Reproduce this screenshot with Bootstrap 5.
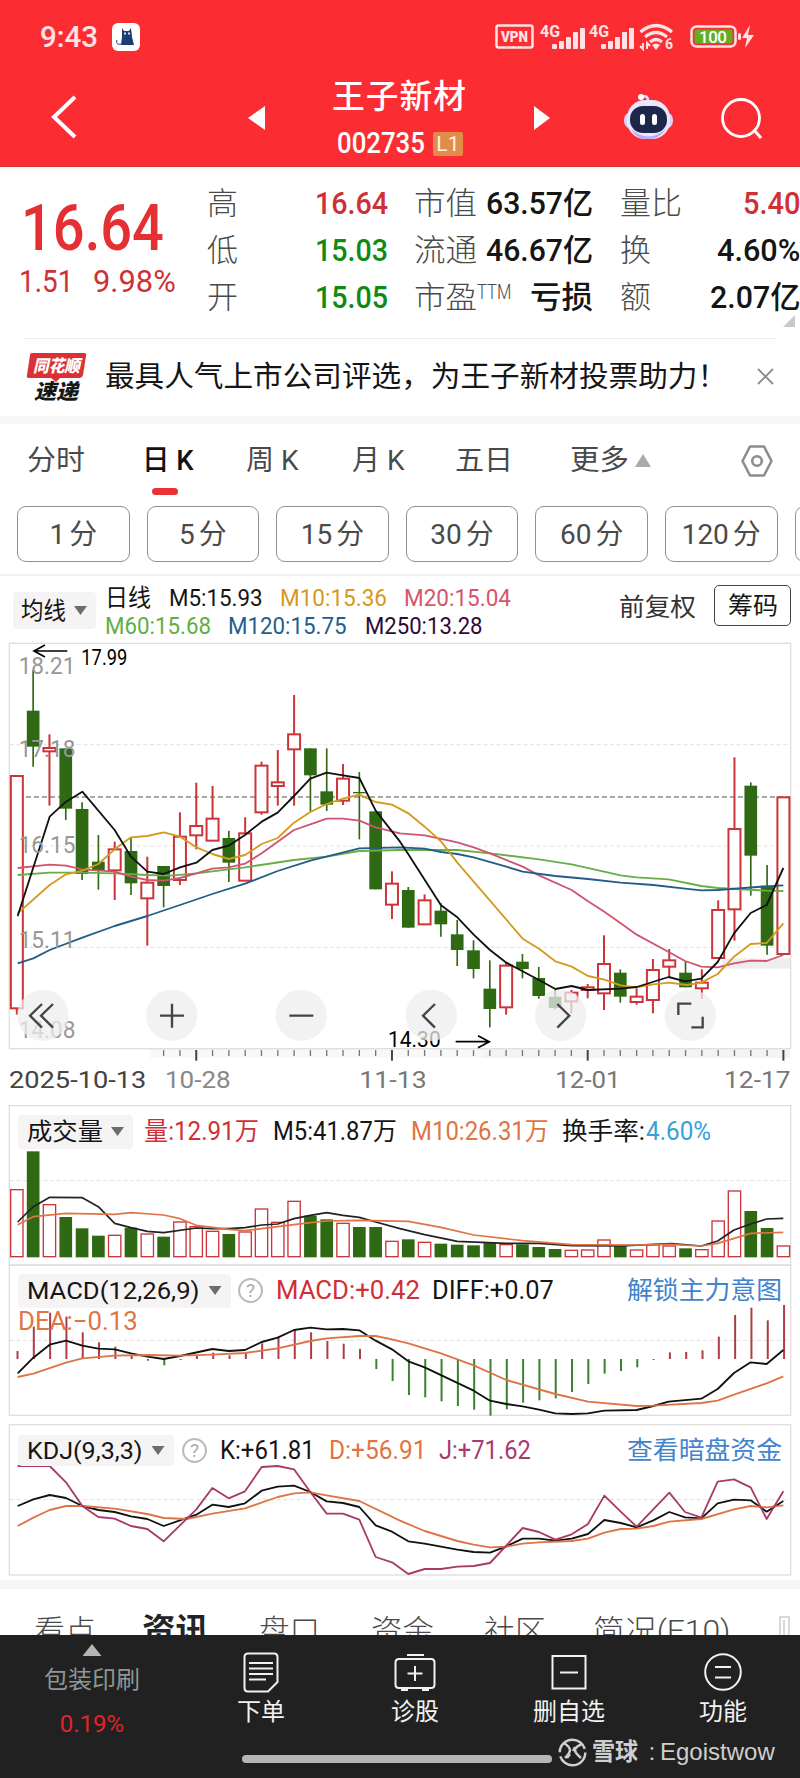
<!DOCTYPE html>
<html lang="zh-CN">
<head>
<meta charset="utf-8">
<meta name="viewport" content="width=device-width, initial-scale=1">
<title>王子新材 002735</title>
<link href="https://cdn.jsdelivr.net/npm/bootstrap@5.3.0/dist/css/bootstrap.min.css" rel="stylesheet">
<style>
:root{--up:#cf3035;--down:#118a12;--ink:#151515;--sub:#4a4a4a}
body{font-family:Roboto,"Noto Sans CJK SC",sans-serif;color:var(--ink);background:#fff;width:800px;height:1778px;overflow:hidden;line-height:1}
[data-w]{display:inline-block;white-space:nowrap;transform-origin:0 50%;flex:none}
svg{display:block;flex:none;overflow:visible}
.rowgrid{display:grid;align-items:center;justify-items:start}
/* header */
.top{height:167px;background:#fb2d33;border-bottom:1px solid #c9353a;color:#fff}
.status{height:74px;padding-left:40px;color:#ffe3e4;grid-template-columns:72px 383px 45px 49px 50px 51px 51px 1fr;font-size:29px;font-weight:500}
.navrow{height:92px;grid-template-columns:244px 82px 203px 92px 92px 1fr;padding-left:0}
.navrow>*{align-self:start}
.name{font-size:33px;font-weight:500;letter-spacing:1px;height:55px;line-height:46px;padding-left:6px}
.coderow{display:flex;align-items:center;gap:8px;padding-left:11px;height:29px;margin-top:0;transform:translateY(0)}
.code{font-size:29px;font-weight:500}
.lv{background:#e28c4a;width:30px;height:24px;border-radius:2px;font-size:21px;color:#fff3e0;line-height:25px;text-align:center}
/* quote */
.quote{height:171px;padding-top:10px;grid-template-columns:207px 181px 26px 179px 27px 180px;align-items:start;justify-items:stretch;border-top:3px solid #fafaf5;position:relative}
.cell{height:47px;display:flex;align-items:center;justify-content:space-between;font-size:31px;color:var(--ink);font-weight:500}
.cell>:first-child{font-weight:300;color:var(--sub)}
.price{font-size:65px;font-weight:500;color:#e62f33;height:65px;line-height:65px;padding-left:21px;margin-top:16px}
.chg{font-size:32px;color:var(--up);padding-left:19px;display:flex;gap:20px;height:46px;line-height:46px;margin-top:-3px}
.up{color:var(--up)!important}.dn{color:var(--down)!important}
.corner{position:absolute;right:5px;top:145px;width:12px;height:12px;background:#c9c9c9;clip-path:polygon(100% 0,100% 100%,0 100%)}
/* promo */
.promo{height:78px;grid-template-columns:78px 652px 1fr;padding-left:27px;font-size:29px;position:relative}
.promo::before{content:"";position:absolute;left:25px;right:25px;top:0;border-top:1px solid #ececec}
.band{height:8px;background:#f6f6f6}
.ktabs{height:74px;grid-template-columns:115px 104px 106px 103px 115px 65px 106px 1fr;padding-left:27px;padding-bottom:1px;font-size:28px;color:var(--sub)}
.ktabs .on{color:#111;font-weight:500;position:relative}
.ktabs .on i{position:absolute;left:10px;bottom:-20px;width:26px;height:7px;border-radius:4px;background:#ea3236}
.mins{height:78px;padding:8px 0 0 17px;display:flex;gap:17px;overflow:hidden;border-bottom:2px solid #f0f2f2}
.mins .btn{flex:none;width:112.6px;height:56px;border:1px solid #909090;border-radius:9px;padding:2px 0 0;color:var(--sub);display:flex;align-items:center;justify-content:center;font-size:28px;gap:4px}
/* moving averages */
.ma{height:64px;display:grid;grid-template-columns:92px 514px 95px 86px;justify-items:start;padding-left:13px;padding-top:8px}
.pill{background:#f6f3f4;border-radius:4px;display:inline-flex;align-items:center;padding:0 9px;gap:8px;height:34px;font-size:24px}
.tri{width:13px;height:9px;background:#6d6d6d;clip-path:polygon(0 0,100% 0,50% 100%)}
.tri.rev{clip-path:polygon(50% 0,100% 100%,0 100%)}
.l1,.l2{height:28px;font-size:24px}
.l1{grid-template-columns:64px 111px 124px 1fr}.l2{grid-template-columns:123px 137px 1fr}
.chip{height:41px;width:77px;border:1px solid #444;border-radius:5px;font-size:24px;display:flex;align-items:center;justify-content:center;margin-top:1px}
/* panels */
.panel{position:relative}
.panel>svg{position:absolute;left:0;top:0}
.panel>.rowgrid,.panel>.dea{position:relative}
.dea{font-size:26px;padding-left:18px}
.lg{height:35px;padding-left:18px;font-size:25px}
.lv1{grid-template-columns:126px 129px 138px 151px 84px 1fr}
.lv2{grid-template-columns:220px 38px 156px 195px 1fr}
.lv3{grid-template-columns:164px 38px 109px 110px 188px 1fr}
.lv3 .pill{height:31px}
.link{color:#4184cb}.or{color:#e07443}.pu{color:#a83a70}
.q{width:25px;height:25px;border:2px solid #bbb;border-radius:50%;color:#aaa;font-size:19px;line-height:21px;text-align:center}
.news{height:46px;grid-template-columns:108px 117px 112px 113px 109px 186px 1fr;padding:27px 0 0 34px;overflow:hidden;font-size:30px;font-weight:300;color:var(--sub);align-items:start}
/* bottom bar */
.dock{height:143px;background:#212121;color:#f2f2f2;display:grid;grid-template-columns:184px 154px 154px 154px 154px;justify-items:center;position:relative}
.dock>div{display:flex;flex-direction:column;align-items:center;font-size:24px}
.dock .ic{margin-top:17px;height:42px}
.dock .lb{margin-top:6px;height:26px;line-height:24px}
.home{position:absolute;left:242px;top:120px;width:310px;height:8px;border-radius:4px;background:#b5b5b5}
.wm{position:absolute;left:558px;top:101px;display:grid!important;grid-template-columns:34px 53px 15px 1fr;color:#cfcfcf;height:32px}
</style>
</head>
<body>
<header class="top">
  <div class="status rowgrid">
    <span data-w="58">9:43</span>
    <svg width="28" height="28" viewBox="0 0 28 28"><rect width="28" height="28" rx="6" fill="#fff"/><path d="M10 5l2 3h5l2-3 1 9 2 8H9l1-8z" fill="#1d3c70"/><path d="M9 21c-4 1-5-1-4-4" fill="none" stroke="#1d3c70"/><path d="M12 10.500h2M16 10.500h2" stroke="#cfe3ff" stroke-width="2"/></svg>
    <svg width="40" height="26" viewBox="0 0 40 26"><rect x="1.500" y="1.500" width="36" height="22" rx="2" fill="none" stroke="#ffe3e4" stroke-width="2.500"/><text x="6" y="17.500" font-size="14" font-weight="900" fill="#ffe3e4" textLength="27" lengthAdjust="spacingAndGlyphs">VPN</text></svg>
    <svg width="46" height="26" viewBox="0 0 46 26"><g id="sig" fill="#ffe3e4"><text x="0" y="13" font-size="16.500" font-weight="700" textLength="20" lengthAdjust="spacingAndGlyphs">4G</text><rect x="12" y="20" width="5" height="5" rx="1"/><rect x="19" y="17" width="5" height="8" rx="1"/><rect x="26" y="13" width="5" height="12" rx="1"/><rect x="33" y="8" width="5" height="17" rx="1"/><rect x="40" y="4" width="5" height="21" rx="1"/></g></svg>
    <svg width="46" height="26" viewBox="0 0 46 26"><use href="#sig"/></svg>
    <svg width="36" height="28" viewBox="0 0 36 28"><g fill="none" stroke="#ffe3e4" stroke-width="3.200"><path d="M1.500 9Q17 -4 33 9M6 14Q17 5 28 14M11 19Q17 14 23 19"/></g><path d="M13 22q4-3 8 0l-4 5z" fill="#ffe3e4"/><path d="M4 20v6l-3-3M8 26v-6l3 3" stroke="#ffe3e4" stroke-width="2" fill="none"/><text x="26" y="26" font-size="14" font-weight="700" fill="#ffe3e4">6</text></svg>
    <svg width="54" height="24" viewBox="0 0 54 24"><rect x="1.500" y="1.500" width="44" height="20" rx="5" fill="none" stroke="#ffe3e4" stroke-width="2.500"/><rect x="4.500" y="4.500" width="38" height="14" rx="2" fill="#62ad22"/><rect x="48" y="8" width="3" height="7" rx="1.500" fill="#ffe3e4"/><text x="9" y="17.500" font-size="17" fill="#fff" textLength="28">100</text></svg>
    <svg width="14" height="24" viewBox="0 0 14 24"><path d="M9 0L1 13h5L4 23l9-13H7z" fill="#ffe3e4"/></svg>
  </div>
  <div class="navrow rowgrid">
    <svg width="100" height="92"><path d="M75 23L54 43l21 20" fill="none" stroke="#fff" stroke-width="4"/></svg>
    <svg width="30" height="92"><path d="M4 44l17-12v24z" fill="#fff"/></svg>
    <div class="d-flex flex-column align-items-start">
      <div class="name"><span data-w="135">王子新材</span></div>
      <div class="coderow"><span class="code" data-w="88">002735</span><span class="lv">L1</span></div>
    </div>
    <svg width="30" height="92"><path d="M5 32l16 12-16 12z" fill="#fff"/></svg>
    <svg width="56" height="92" viewBox="0 0 56 92"><path d="M20 23q8-3 7 6" fill="none" stroke="#e6dcfa" stroke-width="2.500"/><circle cx="20" cy="23" r="3" fill="#fff"/><rect x="3" y="38" width="49" height="17" rx="8" fill="#d9d3fa"/><rect x="6" y="26" width="43" height="39" rx="18" fill="#e9e6fd"/><path d="M10 55q17 15 35 0-6 10-18 10T10 55z" fill="#b9aaf2"/><rect x="9" y="32" width="37" height="27" rx="13" fill="#1d2749"/><rect x="19" y="40" width="5" height="11" rx="2.500" fill="#fff"/><rect x="31" y="40" width="5" height="11" rx="2.500" fill="#fff"/></svg>
    <svg width="50" height="92"><circle cx="28" cy="44" r="18.500" fill="none" stroke="#fff" stroke-width="2.800"/><path d="M41 56l7 8" stroke="#fff" stroke-width="3"/></svg>
  </div>
</header>

<section class="quote rowgrid">
  <div><div class="price"><span data-w="143">16.64</span></div><div class="chg"><span data-w="54">1.51</span><span data-w="83">9.98%</span></div></div>
  <div><div class="cell"><span>高</span><span class="up" data-w="73">16.64</span></div><div class="cell"><span>低</span><span class="dn" data-w="73">15.03</span></div><div class="cell"><span>开</span><span class="dn" data-w="73">15.05</span></div></div>
  <i></i>
  <div><div class="cell"><span data-w="63">市值</span><span data-w="107">63.57亿</span></div><div class="cell"><span data-w="63">流通</span><span data-w="107">46.67亿</span></div><div class="cell"><span class="d-flex"><span data-w="63">市盈</span><small class="fs-5 align-self-start" data-w="34">TTM</small></span><span data-w="63">亏损</span></div></div>
  <i></i>
  <div><div class="cell"><span data-w="62">量比</span><span class="up" data-w="57">5.40</span></div><div class="cell"><span>换</span><span data-w="83">4.60%</span></div><div class="cell"><span>额</span><span data-w="90">2.07亿</span></div></div>
  <div class="corner"></div>
</section>

<section class="promo rowgrid">
  <svg width="60" height="50" viewBox="0 0 60 50"><path d="M5 1h52q3 0 2 3l-3 19q-1 3-4 3H33l-4 4-5-4H2q-3 0-2-3L3 3q0-2 2-2z" fill="#dc3037"/><text x="6" y="20" font-size="17" font-weight="900" font-style="italic" fill="#fff" textLength="47" lengthAdjust="spacingAndGlyphs" font-family="Noto Sans CJK SC">同花顺</text><text x="7" y="47" font-size="21" font-weight="900" font-style="italic" fill="#171717" textLength="44" lengthAdjust="spacingAndGlyphs" font-family="Noto Sans CJK SC">速递</text></svg>
  <span data-w="622">最具人气上市公司评选，为王子新材投票助力！</span>
  <svg width="18" height="18"><path d="M1 1l15 15M16 1L1 16" stroke="#8a8a8a" stroke-width="1.800"/></svg>
</section>
<div class="band"></div>
<nav class="ktabs rowgrid">
  <span data-w="58">分时</span><span class="on"><span data-w="52">日 K</span><i></i></span><span data-w="53">周 K</span><span data-w="53">月 K</span><span data-w="58">五日</span><span data-w="59">更多</span>
  <span class="tri rev" style="width:16px;height:13px;background:#aaa"></span>
  <svg width="32" height="32"><path d="M9 1.500h14L30.500 16 23 30.500H9L1.500 16z" fill="none" stroke="#8d8d8d" stroke-width="2.600" stroke-linejoin="round"/><circle cx="16" cy="16" r="4.800" fill="none" stroke="#8d8d8d" stroke-width="2.600"/></svg>
</nav>
<div class="mins">
  <button class="btn">1<span>分</span></button><button class="btn">5<span>分</span></button><button class="btn">15<span>分</span></button><button class="btn">30<span>分</span></button><button class="btn">60<span>分</span></button><button class="btn">120<span>分</span></button><button class="btn"></button>
</div>
<section class="ma">
  <div><span class="pill mt-2 ps-2" style="height:37px"><span data-w="45">均线</span><i class="tri"></i></span></div>
  <div>
    <div class="l1 rowgrid"><span data-w="46">日线</span><span data-w="94">M5:15.93</span><span data-w="107" style="color:#d69a1c">M10:15.36</span><span data-w="107" style="color:#d8546a">M20:15.04</span></div>
    <div class="l2 rowgrid"><span data-w="106" style="color:#62ae45">M60:15.68</span><span data-w="119" style="color:#235f8c">M120:15.75</span><span data-w="118" style="color:#2c0c37">M250:13.28</span></div>
  </div>
  <span data-w="77" style="color:#333;font-size:25px;padding-top:11px">前复权</span>
  <div class="chip"><span data-w="50">筹码</span></div>
</section>

<section class="panel" id="price" style="height:465px"></section>
<section class="panel" id="vol" style="height:160px;padding-top:9px">
  <div class="lg lv1 rowgrid"><span class="pill"><span data-w="76">成交量</span><i class="tri"></i></span><span class="up" data-w="115">量:12.91万</span><span data-w="124">M5:41.87万</span><span class="or" data-w="138">M10:26.31万</span><span data-w="83">换手率:</span><span data-w="65" style="color:#38a0d6">4.60%</span></div>
</section>
<section class="panel" id="macd" style="height:155px;padding-top:8px">
  <div class="lg lv2 rowgrid"><span class="pill" style="gap:9px"><span data-w="173">MACD(12,26,9)</span><i class="tri"></i></span><span class="q">?</span><span class="up" data-w="144">MACD:+0.42</span><span data-w="122">DIFF:+0.07</span><span class="link" data-w="155">解锁主力意图</span></div>
  <div class="dea or"><span data-w="120">DEA:−0.13</span></div>
</section>
<section class="panel" id="kdj" style="height:160px;padding-top:13px">
  <div class="lg lv3 rowgrid"><span class="pill" style="gap:9px"><span data-w="116">KDJ(9,3,3)</span><i class="tri"></i></span><span class="q">?</span><span data-w="95">K:+61.81</span><span class="or" data-w="97">D:+56.91</span><span class="pu" data-w="92">J:+71.62</span><span class="link" data-w="155">查看暗盘资金</span></div>
</section>
<div class="band" style="height:9px"></div>
<nav class="news rowgrid">
  <span data-w="62">看点</span><b class="fw-bold text-dark" style="font-size:32px;margin-top:-2px" data-w="67">资讯</b><span data-w="61">盘口</span><span data-w="63">资金</span><span data-w="62">社区</span><span data-w="138">简况(F10)</span>
  <svg width="12" height="30"><path d="M1 30V1h9v29M5 4v16" fill="none" stroke="#ccc" stroke-width="1.500"/></svg>
</nav>
<footer class="dock">
  <div style="color:#8f9694"><i class="tri rev" style="width:19px;height:12px;background:#b5b5b5;margin-top:9px"></i><span style="margin-top:12px" data-w="96">包装印刷</span><span style="color:#e0242b;margin-top:20px" data-w="64">0.19%</span></div>
  <div><svg class="ic" width="36" height="42" viewBox="0 0 36 42"><path d="M5 1.500h26q3.500 0 3.500 3.500v25L25 39.500H5q-3.500 0-3.500-3.500V5q0-3.500 3.500-3.500zM6 11h24M6 16.500h24M6 22h24M6 27.500h17" fill="none" stroke="#f2f2f2" stroke-width="2"/></svg><span class="lb">下单</span></div>
  <div><svg class="ic" width="42" height="42" viewBox="0 0 42 42"><path d="M13 3h17M5 7h32q3.500 0 3.500 3.500v22q0 3.500-3.500 3.500H5q-3.500 0-3.500-3.500v-22Q1.500 7 5 7zM21 14v15M13.500 21.500h15M7 38h7M28 38h7" fill="none" stroke="#f2f2f2" stroke-width="2"/></svg><span class="lb">诊股</span></div>
  <div><svg class="ic" width="36" height="42" viewBox="0 0 36 42"><path d="M1.500 4h33v32.500h-33zM9 20.500h18" fill="none" stroke="#f2f2f2" stroke-width="2"/></svg><span class="lb">删自选</span></div>
  <div><svg class="ic" width="40" height="42" viewBox="0 0 40 42"><circle cx="20" cy="20" r="17.800" fill="none" stroke="#f2f2f2" stroke-width="2"/><path d="M12 15h16M12 25.500h16" stroke="#f2f2f2" stroke-width="2"/></svg><span class="lb">功能</span></div>
  <div class="home" style="display:block"></div>
  <div class="wm"><svg width="29" height="29" viewBox="0 0 29 29"><circle cx="14.500" cy="14.500" r="12.800" fill="none" stroke="#cfcfcf" stroke-width="2.500" stroke-dasharray="36 4.200"/><path d="M6 5q6 4 6 7 0 3-5 8M24 6q-7 3-7 6 0 3 6 8M9 20l3-4M17 9l-2 4" fill="none" stroke="#cfcfcf" stroke-width="2.500"/></svg><span class="fw-semibold" data-w="51">雪球</span><span class="ps-1">:</span><span data-w="115" style="font-family:'Liberation Sans'">Egoistwow</span></div>
</footer>

<script>
/* Chart geometry: three units per CSS pixel, one candle every 48.93 units */
const X=i=>50.5+48.93*i, RED='#cb3439', GRN='#2f6914';
const rect=(x,y,w,h,a)=>`<rect x="${x}" y="${y}" width="${w}" height="${h}" ${a}/>`;
const line=(x1,y1,x2,y2,c,w,a='')=>`<path d="M${x1} ${y1}L${x2} ${y2}" stroke="${c}" stroke-width="${w}" ${a}/>`;
const poly=(s,c,w=5.5)=>`<polyline points="${s.replace(/;/g,' ')}" fill="none" stroke="${c}" stroke-width="${w}" stroke-linejoin="round"/>`;
const text=(s,x,y,w,c,f=72,a='')=>`<text x="${x}" y="${y}" textLength="${w}" lengthAdjust="spacingAndGlyphs" font-size="${f}" fill="${c}" ${a}>${s}</text>`;
const frame=(t,b)=>rect(28,t,2344,b-t,'fill="none" stroke="#dedede" stroke-width="4"');
const dash=y=>line(30,y,2370,y,'#e2e2e2',3,'stroke-dasharray="12 8"');
const put=(id,y,h,s)=>document.getElementById(id).insertAdjacentHTML('afterbegin',`<svg width="800" height="${h/3}" viewBox="0 ${y} 2400 ${h}">${s}</svg>`);

const K=`r408,408,1105,1124 g90,212,320,380 r283,324,334,497 g325,325,506,540 g487,507,702,720 g585,665,690,749 r605,628,691,780 g592,633,730,765 r650,728,775,917 g678,678,738,802 r517,590,720,735 r428,558,586,628 r438,536,602,602 g572,594,668,726 r532,580,722,722 r365,377,517,524 r330,427,438,497 r165,283,328,497 g325,325,406,514 g325,454,494,513 r372,416,482,495 g396,456,460,598 g514,514,748,748 r694,731,794,837 g741,750,863,863 r763,781,853,853 g790,812,853,890 g840,883,930,978 g901,931,987,1015 g961,1046,1107,1162 r966,977,1102,1124 g942,965,987,1015 g981,1014,1068,1076 g1050,1070,1104,1108 r1050,1058,1084,1120 r1032,1042,1050,1075 r886,972,1060,1110 g988,998,1070,1088 r1045,1070,1086,1094 r957,990,1080,1120 r927,961,980,1010 g965,998,1042,1042 r988,1028,1045,1077 r781,810,954,954 r352,567,808,902 g427,437,647,767 g675,737,917,944 r472,472,942,942`.split(' ');
let s=rect(1440,1228,930,26,'fill="#f3f3f3"')+rect(450,1228,1000,26,'fill="#f8f8f8"')+rect(2165,955,207,31,'fill="#eee"')+frame(10,1226)+dash(314)+dash(618)+dash(922)+line(30,471,2370,471,'#8d8d7c',4,'stroke-dasharray="15 9"');
K.forEach((k,i)=>{const c=k[0]=='r'?RED:GRN,[h,t,b,l]=k.slice(1).split(',').map(Number),x=X(i);
 if(k[0]=='g')s+=line(x,h,x,l,c,5)+rect(x-19,t,38,b-t,`fill="${c}"`);
 else s+=line(x,h,x,t,c,6)+line(x,b,x,l,c,6)+rect(x-18,t,36,b-t,`fill="#fff" stroke="${c}" stroke-width="6"`);});
s+=poly('53,705;149,698;247,698;344,700;442,705;515,707;589,700;735,682;882,660;980,650;1078,633;1200,630;1372,630;1470,640;1617,658;1715,673;1862,706;1910,712;2006,718;2104,738;2153,744;2300,752;2350,753','#67ad48');
s+=poly('53,684;149,674;198,677;247,688;344,695;393,710;442,720;491,722;540,714;589,700;637,686;686,682;735,671;785,640;833,605;882,570;931,553;980,536;1029,536;1078,542;1127,562;1200,580;1274,586;1372,607;1421,622;1470,640;1568,680;1617,706;1715,750;1764,784;1813,815;1862,850;1910,884;2006,936;2055,963;2104,980;2153,982;2202,970;2252,962;2300,963;2350,945','#cf5470');
s+=poly('53,970;100,955;149,930;247,893;344,858;442,828;540,795;637,762;735,731;833,693;931,662;1078,625;1200,622;1274,626;1323,636;1372,642;1421,652;1519,680;1568,695;1666,708;1764,717;1862,728;1960,735;2055,746;2104,751;2153,750;2300,739;2350,736','#235d87');
s+=poly('53,820;149,735;198,703;247,692;295,672;344,628;393,592;442,588;491,577;540,590;589,622;637,642;686,657;735,645;785,612;833,594;882,548;931,516;980,492;1029,476;1078,464;1127,486;1176,494;1225,520;1274,560;1323,604;1372,668;1568,896;1617,926;1666,964;1715,980;1764,1008;1813,1019;1862,1036;1910,1042;1960,1033;2008,1028;2060,1035;2104,1028;2153,1002;2202,950;2252,912;2300,909;2350,850','#d39a1b');
s+=poly('53,828;149,530;198,485;247,455;344,570;393,650;442,695;491,702;540,682;589,668;637,630;686,617;735,585;785,545;833,518;882,468;931,416;980,398;1029,406;1078,414;1127,512;1200,605;1225,643;1323,796;1372,832;1421,884;1470,930;1519,968;1617,1020;1666,1047;1715,1038;1764,1050;1862,1046;1910,1041;2006,1011;2055,1024;2104,1016;2153,966;2202,880;2252,819;2300,795;2350,684','#111');
[['18.21',102],['17.18',352],['16.15',638],['15.11',924],['14.08',1194]].forEach(([t,y])=>s+=text(t,56,y,170,'#979797',73));
s+='<path d="M202 33H102M135 15L102 33l33 18M1367 1205h100M1434 1187l34 18-34 18" fill="none" stroke="#000" stroke-width="5"/>'+text('17.99',244,76,138,'#000',66)+text('14.30',1164,1222,158,'#000',66);
[129,515,904,1294,1682,2071].forEach(x=>s+=`<circle cx="${x}" cy="1126" r="77" fill="#ededed" fill-opacity=".75"/>`);
s+='<path d="M126 1092l-36 35 36 36M159 1092l-36 35 36 36M480 1127h72M516 1091v72M868 1127h72M1305 1092l-36 35 36 36M1672 1092l36 35-36 36M2074 1091h-39v34M2108 1130v32h-34" fill="none" stroke="#444" stroke-width="7"/>';
for(let i=9;i<48;i++){const m=(i+1)%12==0;s+=line(X(i),1230,X(i),m?1262:1248,m?'#444':'#777',m?6:4);}
[['2025-10-13',27,412,'#444'],['10-28',495,197,'#888'],['11-13',1078,202,'#777'],['12-01',1666,196,'#777'],['12-17',2172,200,'#777']].forEach(d=>s+=text(d[0],d[1],1344,d[2],d[3],73));
put('price',0,1395,s);

const V='r297 g184 r342 g381 g415 g437 r434 g413 r430 g440 r394 r408 r422 g432 r424 r355 r395 r332 g377 g388 r398 g411 g411 r452 g448 r455 g461 g464 g466 g459 r462 g463 g471 g477 r479 r478 r448 g468 r478 r463 r466 g475 r477 r391 r301 g363 g414 r466'.split(' ');
s=frame(47,525)+dash(272);
V.forEach((v,i)=>{const t=+v.slice(1),x=X(i);s+=v[0]=='g'?rect(x-19,t,38,502-t,`fill="${GRN}"`):rect(x-18.5,t+2,37,498-t,`fill="#fff" stroke="${RED}" stroke-width="4"`);});
s+=poly('53,396;100,350;149,322;247,323;295,350;344,400;393,413;442,424;491,428;589,414;637,416;686,416;735,413;785,405;833,402;882,386;931,376;980,368;1029,376;1078,382;1127,396;1200,416;1274,434;1372,454;1519,460;1617,460;1715,467;1862,468;1960,463;2015,461;2104,468;2153,453;2202,420;2252,402;2300,387;2350,385','#222',5);
s+=poly('53,404;100,380;198,370;344,373;393,368;491,375;540,386;589,406;686,418;735,422;833,410;931,398;980,393;1078,391;1225,394;1323,412;1421,435;1568,452;1715,464;1910,465;2008,463;2104,468;2153,460;2252,430;2350,427','#e07443',5);
put('vol',45,480,s);

s=frame(526,976)+dash(751);
[783,710,668,680,727,757,770,798,812,826,810,797,788,796,791,760,740,718,727,753,761,777,837,873,915,922,934,948,959,977,958,938,931,925,906,882,851,843,832,810,787,786,781,740,675,653,691,645].forEach((v,i)=>s+=line(X(i)+2,807,X(i)+2,v,v<807?'#ad3c44':'#3d8034',6));
s+=poly('53,850;100,803;149,764;198,752;247,767;295,776;344,778;393,790;442,800;491,807;540,798;637,777;686,783;735,780;785,756;833,743;882,720;931,713;980,718;1029,717;1078,721;1127,752;1176,778;1225,814;1274,832;1421,902;1470,932;1519,942;1568,949;1617,959;1666,970;1715,972;1764,970;1813,962;1910,960;1960,948;2006,935;2104,926;2153,897;2202,849;2252,817;2300,822;2350,780','#111');
s+=poly('53,861;100,851;198,818;247,805;344,797;442,795;540,797;637,794;735,789;833,775;931,753;980,745;1078,738;1127,738;1176,748;1225,760;1323,790;1421,826;1519,870;1666,912;1764,935;1910,948;1960,947;2104,939;2153,932;2202,914;2300,880;2350,859','#dd7446');
put('macd',525,465,s);

s=frame(14,465)+dash(239);
s+=poly('53,258;100,238;149,225;198,234;247,258;295,270;344,276;393,289;442,297;491,318;589,284;637,254;686,261;735,250;785,212;833,200;882,197;931,216;980,244;1029,249;1078,261;1127,316;1176,335;1225,364;1274,371;1372,389;1421,396;1470,398;1519,379;1568,356;1617,356;1666,362;1715,356;1764,342;1813,300;1862,309;1910,322;1960,301;2008,276;2055,292;2104,295;2153,250;2202,239;2252,241;2300,275;2350,243','#111');
s+=poly('53,318;100,293;149,270;198,258;247,258;344,266;442,282;491,294;560,297;637,281;735,265;833,231;882,220;931,217;980,226;1078,243;1200,302;1274,333;1372,363;1421,374;1470,382;1519,380;1568,371;1617,367;1715,363;1764,356;1813,338;1862,327;1910,326;1960,318;2008,305;2104,297;2202,268;2252,258;2300,262;2350,256','#dd7446');
s+=poly('53,138;149,138;198,187;247,258;295,291;344,296;393,318;442,327;491,364;589,268;637,204;686,235;735,214;785,141;833,138;882,148;931,216;980,281;1029,281;1078,299;1127,411;1176,427;1225,462;1274,447;1323,447;1372,440;1421,438;1470,429;1568,324;1617,336;1666,359;1715,343;1764,312;1813,227;1862,275;1910,320;2008,218;2055,276;2104,293;2153,185;2202,178;2252,202;2300,297;2350,214','#a83a68');
put('kdj',0,480,s);

/* Narrow the labels to their column widths */
document.querySelectorAll('[data-w]').forEach(e=>{const n=e.offsetWidth,w=+e.dataset.w;e.style.transform=`scaleX(${w/n})`;e.style.marginRight=(w-n)+'px';});
</script>
<script src="https://cdn.jsdelivr.net/npm/bootstrap@5.3.0/dist/js/bootstrap.bundle.min.js"></script>
</body>
</html>
